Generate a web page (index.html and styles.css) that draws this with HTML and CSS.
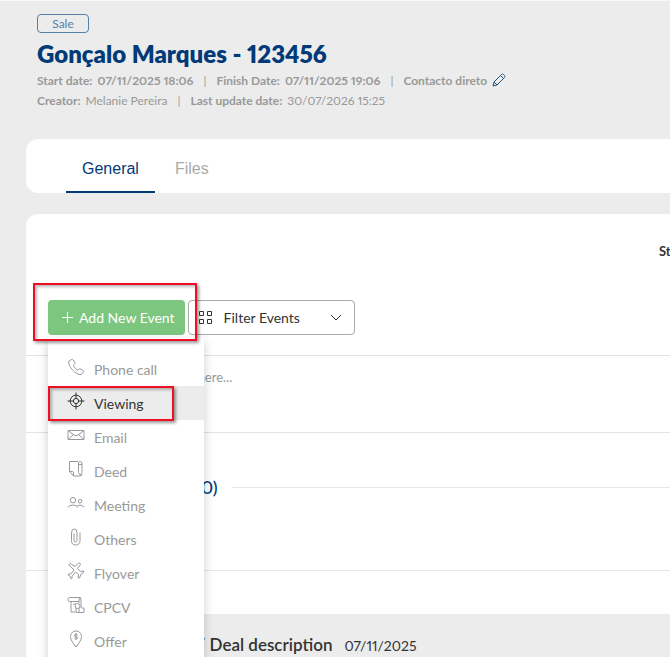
FILE: index.html
```html
<!DOCTYPE html>
<html lang="en">
<head>
  <meta charset="UTF-8" />
  <meta name="viewport" content="width=device-width, initial-scale=1" />
  <title>Gonçalo Marques - 123456</title>
  <link rel="stylesheet" href="styles.css">
</head>
<body>
  <div class="page">
    <header class="deal-header">
      <span class="badge">Sale</span>
      <h1>Gonçalo Marques - 123456</h1>
      <div class="meta">
        <b>Start date:</b><b>07/11/2025 18:06</b><i class="sep">|</i>
        <b>Finish Date:</b><b>07/11/2025 19:06</b><i class="sep">|</i>
        <b>Contacto direto</b>
        <button class="edit" type="button" aria-label="Edit">
          <svg width="14" height="14" viewBox="0 0 14 14"><path d="M1 13l1-4 7.500-7.500q1-1 2 0l1 1q1 1 0 2L5 12zM2 9l3 3M8.500 2.500l3 3"/></svg>
        </button>
      </div>
      <div class="meta">
        <b>Creator:</b><span>Melanie Pereira</span><i class="sep">|</i>
        <b>Last update date:</b><span>30/07/2026 15:25</span>
      </div>
    </header>

    <nav class="tabs">
      <a class="tab active" href="#general">General</a>
      <a class="tab" href="#files">Files</a>
    </nav>

    <main class="card" id="general">
      <div class="state-row"><span class="state">Status</span></div>

      <div class="toolbar">
        <div class="dropdown">
          <button class="btn-add" type="button">
            <svg width="11" height="11" viewBox="0 0 11 11"><path d="M5.500 0v11M0 5.500h11"/></svg>
            Add New Event
          </button>
          <div class="mark mark-add"></div>

          <div class="menu">
            <button class="item" type="button">
              <svg viewBox="0 0 18 18"><path d="M4.500 1.500L1.800 3.200C.2 7.500 9 17.500 14 16.500l2.300-2c.6-.6.5-1.200-.1-1.700l-2.700-1.900c-.6-.4-1.100-.3-1.500.2l-1.100 1.200c-2-1-3.700-3-4.500-5l1.200-1c.5-.5.6-1 .2-1.600L6.100 1.800c-.5-.6-1-.7-1.600-.3z"/></svg>
              Phone call
            </button>
            <button class="item selected" type="button">
              <svg viewBox="0 0 18 18"><circle cx="9" cy="9" r="5.800"/><circle cx="9" cy="9" r="2.600"/><path d="M9 .5v6M9 11.500v6M.5 9h6M11.500 9h6"/></svg>
              Viewing
            </button>
            <button class="item" type="button">
              <svg viewBox="0 0 18 18"><path d="M1 4.500h16v9H1zM1 4.500l6 4.500q2 1.300 4 0l6-4.500M1 13.500l5.500-5M17 13.500l-5.500-5"/></svg>
              Email
            </button>
            <button class="item" type="button">
              <svg viewBox="0 0 18 18"><path d="M11 1.500H2.500v10l4 4.500H13q2 0 2-2M2.500 11.500h3q1 0 1 1V16M11.500 12.500V2.500q1.700-2 3.500 0V12.500L13.200 15zM11.500 4.500H15"/></svg>
              Deed
            </button>
            <button class="item" type="button">
              <svg viewBox="0 0 18 18"><circle cx="6" cy="6.200" r="2.700"/><circle cx="13" cy="7.200" r="1.800"/><path d="M1 13.500q1.500-2.500 5-2.500t5 2.500M10.500 11.500q4-1.300 6.500 1.500"/></svg>
              Meeting
            </button>
            <button class="item" type="button">
              <svg viewBox="0 0 18 18"><path d="M7 5.500v7q0 1.500 1.500 1.500t1.500-1.500v-8Q10 1 7.300 1T4.500 4.500v8q0 4.500 4.200 4.500t4.300-4.500v-8"/></svg>
              Others
            </button>
            <button class="item" type="button">
              <svg viewBox="0 0 18 18"><path d="M1.500 2.500l2-1 4.500 3 3.500-3.200q2-.8 2 1.200L10.500 6.500l3 3 3-.7.500 1.200-3 2-1.500 4-1.300-.2.300-3.300-3-2.500-3.500 4.500.2 1.700-1 .8-1-2.800L1 12.800l.7-1 2 .2L7 8z"/></svg>
              Flyover
            </button>
            <button class="item" type="button">
              <svg viewBox="0 0 18 18"><path d="M4 5.500H2.500Q1 5.500 1 3.500t1.500-2h11q-1.500.5-1.500 2.500v3M2.500 5.500H12M4 5.500v10.500h4M12 1.500q2 0 2 2.500v8M6 8h2.500"/><circle cx="10.500" cy="10" r="2.500"/><path d="M9 12v4.500h8V12h-2.500M12 12v4.500"/></svg>
              CPCV
            </button>
            <button class="item" type="button">
              <svg viewBox="0 0 18 18"><path d="M9 17Q3.500 10.500 3.500 6.500a5.500 5.500 0 0 1 11 0Q14.500 10.500 9 17zM10.700 5Q9 3.500 7.700 4.700t1.300 1.800 1.300 2T7.300 8M9 3v7"/></svg>
              Offer
            </button>
            <div class="mark mark-item"></div>
          </div>
        </div>

        <button class="btn-filter" type="button">
          <svg width="13" height="13" viewBox="0 0 13 13"><path d="M.5.5h4v4h-4zM8.500.5h4v4h-4zM.5 8.500h4v4h-4zM8.500 8.500h4v4h-4z"/></svg>
          <span>Filter Events</span>
          <svg width="12" height="8" viewBox="0 0 12 8"><path d="M1 1l5 5 5-5"/></svg>
        </button>
      </div>

      <textarea class="note" aria-label="Comment" placeholder="Write here..."></textarea>

      <section class="group">
        <h2>Events (0)</h2>
      </section>

      <article class="event">
        <h3>Proposal / Deal description</h3>
        <time datetime="2025-11-07">07/11/2025</time>
      </article>
    </main>
  </div>
</body>
</html>
```
FILE: styles.css
```css
* {
  box-sizing: border-box;
}

body {
  margin: 0;
  overflow: hidden;
  background-color: #ececec;
  border-top: 1px solid #f8f8f8;
  font-family: Lato, sans-serif;
  font-variant-numeric: proportional-nums;
  color: #333;
}

button {
  font-family: inherit;
  cursor: pointer;
}

svg {
  flex: none;
  fill: none;
  stroke: currentColor;
}

/* wide desktop layout, cut by smaller windows */
.page {
  min-width: 1292px;
  padding-left: 26px;
}

.deal-header {
  padding: 13px 0 29px 11px;
}

.badge {
  display: block;
  width: 52px;
  height: 19px;
  border: 1px solid #5580a8;
  border-radius: 4px;
  font-size: 12px;
  line-height: 18px;
  text-align: center;
  color: #5580a8;
}

h1 {
  margin: 5px 0 0;
  font-size: 24px;
  line-height: 32px;
  font-weight: 800;
  color: #003a78;
}

.meta {
  display: flex;
  align-items: center;
  gap: 5px;
  height: 20px;
  font-size: 12px;
  color: #999;
}

.sep {
  margin: 0 5px;
  font-style: normal;
}

.edit {
  display: flex;
  padding: 0;
  border: none;
  background: none;
  color: #1c5480;
}

.tabs {
  display: flex;
  height: 54px;
  padding-left: 40px;
  background-color: #fff;
  border-radius: 12px 0 0 12px;
  font-family: "Liberation Sans", Arial, sans-serif;
  font-size: 16px;
}

.tab {
  padding: 0 16px;
  line-height: 60px;
  text-decoration: none;
  color: #aaa;
}

.tab + .tab {
  padding-left: 20px;
}

.active {
  border-bottom: 2px solid #003a78;
  color: #003a78;
}

.card {
  margin-top: 21px;
  background-color: #fff;
  border-top-left-radius: 12px;
}

.state-row {
  display: grid;
  grid-template-columns: 1fr 1fr;
  height: 86px;
  padding-top: 27px;
  font-size: 13px;
  line-height: 20px;
  font-weight: bold;
}

.state {
  grid-column: 2;
}

.toolbar {
  display: flex;
  gap: 3px;
  padding: 0 22px 20px;
}

.dropdown {
  position: relative;
}

.btn-add {
  display: flex;
  align-items: center;
  gap: 6px;
  height: 35px;
  padding: 0 10px 0 14px;
  border: none;
  border-radius: 4px;
  background-color: #7dc680;
  font-size: 14px;
  color: #fff;
}

.btn-filter {
  display: flex;
  align-items: center;
  gap: 12px;
  width: 167px;
  height: 35px;
  padding: 0 12px 0 10px;
  border: 1px solid #aaa;
  border-radius: 4px;
  background-color: #fff;
  font-size: 14px;
  color: #333;
}

.btn-filter span {
  flex: 1;
  text-align: left;
}

.menu {
  position: absolute;
  top: 38px;
  left: 0;
  z-index: 1;
  width: 156px;
  padding: 14px 0 12px;
  background-color: #fff;
  box-shadow: 0 4px 10px #00000033;
}

.item {
  display: flex;
  align-items: center;
  gap: 9px;
  width: 100%;
  height: 34px;
  padding: 0 19px;
  border: none;
  background: none;
  font-size: 14px;
  color: #999;
}

.item svg {
  width: 18px;
  height: 18px;
  margin-bottom: 4px;
}

.selected {
  background-color: #ececec;
  color: #333;
}

/* red highlight frames */
.mark {
  position: absolute;
  z-index: 2;
  border: 2px solid #ee1022;
  box-shadow: 2px 2px 3px #00000066, inset 2px 2px 3px #00000044;
  pointer-events: none;
}

.mark-add {
  top: -17px;
  left: -15px;
  width: 164px;
  height: 58px;
}

.mark-item {
  top: 48px;
  left: 0;
  width: 126px;
  height: 35px;
}

.note {
  display: block;
  width: 100%;
  height: 78px;
  padding: 12px 136px;
  border: solid #dfe4e6;
  border-width: 1px 0;
  outline: none;
  resize: none;
  font-family: inherit;
  font-size: 13px;
  line-height: 18px;
}

.note::placeholder {
  color: #999;
}

.group {
  height: 138px;
  padding: 42px 22px 0 113px;
  border-bottom: 1px solid #e6e6e6;
}

h2 {
  display: flex;
  align-items: center;
  gap: 14px;
  margin: 0;
  font-size: 18px;
  line-height: 24px;
  font-weight: 500;
  color: #003a78;
}

h2::after {
  content: "";
  flex: 1;
  height: 1px;
  background-color: #e6e6e6;
}

.event {
  display: flex;
  align-items: baseline;
  gap: 12px;
  margin: 43px 22px 0;
  padding: 19px 0 20px 80px;
  background-color: #ececec;
}

h3 {
  margin: 0;
  font-size: 17px;
  line-height: 24px;
  font-weight: 600;
}

time {
  font-size: 14px;
}
```
